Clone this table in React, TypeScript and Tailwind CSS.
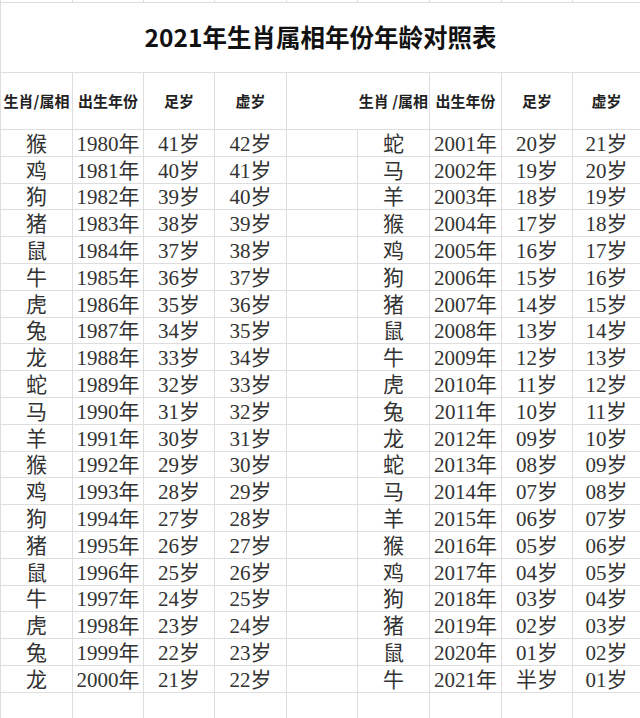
const zodiac = ["猴", "鸡", "狗", "猪", "鼠", "牛", "虎", "兔", "龙", "蛇", "马", "羊"];

const pad = (n: number) => (n < 10 ? `0${n}` : `${n}`);

const rows = Array.from({ length: 21 }, (_, i) => {
  const y1 = 1980 + i;
  const y2 = 2001 + i;
  return {
    z1: zodiac[i % 12],
    y1,
    a1: 2021 - y1,
    z2: zodiac[(i + 21) % 12],
    y2,
    a2: 2021 - y2,
  };
});

const widths = [72, 71, 71, 72, 71, 72, 72, 71, 68];

const cell = "border border-[#dedede] p-0 text-center align-middle";
const head = `${cell} text-[15px] font-bold text-[#222] [font-family:'Noto_Sans_CJK_SC',sans-serif]`;
const data = `${cell} pt-[3px] text-[21px] leading-none text-[#333] [font-family:'Liberation_Serif','Noto_Sans_CJK_SC',serif]`;

export default function App() {
  return (
    <div className="h-[718px] w-[640px] overflow-hidden bg-white">
      <table className="w-[640px] table-fixed border-collapse">
        <colgroup>
          {widths.map((w, i) => (
            <col key={i} style={{ width: w }} />
          ))}
        </colgroup>
        <tbody>
          <tr>
            {widths.map((_, i) => (
              <td key={i} className="border-x border-b border-[#dedede] p-0">
                <div className="h-[2px]" />
              </td>
            ))}
          </tr>
          <tr className="h-[70px]">
            <td
              colSpan={9}
              className="border border-[#dedede] p-0 text-center align-middle text-[24.5px] font-bold text-[#111] [font-family:'Noto_Sans_CJK_SC',sans-serif]"
            >
              2021年生肖属相年份年龄对照表
            </td>
          </tr>
          <tr className="h-[57px]">
            <td className={`${head} whitespace-nowrap`}>生肖/属相</td>
            <td className={head}>出生年份</td>
            <td className={head}>足岁</td>
            <td className={head}>虚岁</td>
            <td colSpan={2} className={`${head} whitespace-nowrap pr-[1px] text-right`}>
              生肖 /属相
            </td>
            <td className={head}>出生年份</td>
            <td className={head}>足岁</td>
            <td className={head}>虚岁</td>
          </tr>
          {rows.map((r) => (
            <tr key={r.y1} className="h-[26.8px]">
              <td className={data}>{r.z1}</td>
              <td className={data}>{r.y1}年</td>
              <td className={data}>{r.a1}岁</td>
              <td className={data}>{r.a1 + 1}岁</td>
              <td className={data}></td>
              <td className={data}>{r.z2}</td>
              <td className={data}>{r.y2}年</td>
              <td className={data}>{r.a2 === 0 ? "半" : pad(r.a2)}岁</td>
              <td className={data}>{pad(r.a2 + 1)}岁</td>
            </tr>
          ))}
          {[0, 1].map((k) => (
            <tr key={`e${k}`} className="h-[26px]">
              {widths.map((_, i) => (
                <td key={i} className={cell} />
              ))}
            </tr>
          ))}
        </tbody>
      </table>
    </div>
  );
}
